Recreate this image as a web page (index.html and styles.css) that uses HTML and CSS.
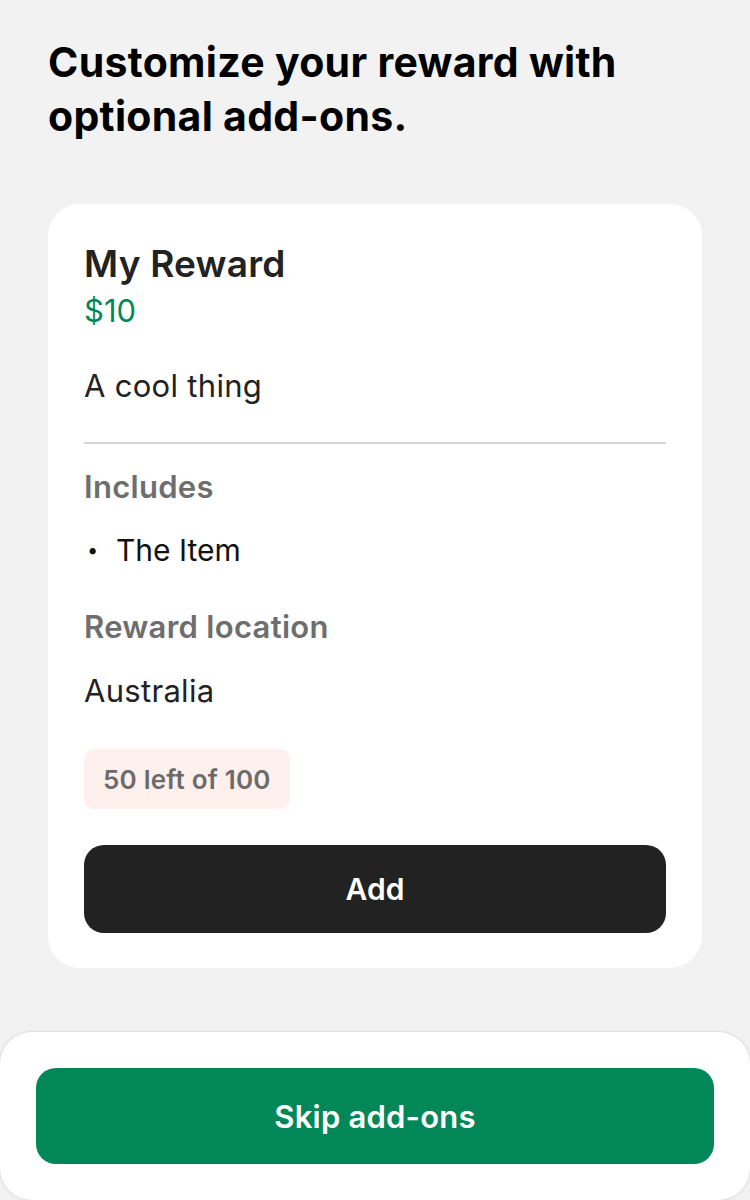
FILE: index.html
```html
<!DOCTYPE html>
<html lang="en">
<head>
<meta charset="utf-8">
<title>Add-ons</title>
<link rel="stylesheet" href="styles.css">
</head>
<body>
<div class="page">
  <main class="content">
    <h1 class="heading">Customize your reward with optional add-ons.</h1>
    <section class="card">
      <h2 class="reward-title">My Reward</h2>
      <div class="price">$10</div>
      <p class="desc">A cool thing</p>
      <hr class="divider">
      <h3 class="label label-includes">Includes</h3>
      <ul class="items">
        <li class="item"><span class="bullet">•</span><span>The Item</span></li>
      </ul>
      <h3 class="label label-location">Reward location</h3>
      <p class="location">Australia</p>
      <div class="badge">50 left of 100</div>
      <button class="btn btn-dark">Add</button>
    </section>
  </main>
  <footer class="sheet">
    <button class="btn btn-green">Skip add-ons</button>
  </footer>
</div>
</body>
</html>
```

FILE: styles.css
```css
* { box-sizing: border-box; }
html, body { margin: 0; padding: 0; }
body {
  background: #f2f2f2;
  font-family: Inter, "Noto Sans", "Liberation Sans", sans-serif;
  color: #222222;
}
.page {
  height: 1200px;
  display: flex;
  flex-direction: column;
  overflow: hidden;
}
.content {
  padding: 35px 48px 0;
}
.heading {
  margin: 0;
  font-size: 41px;
  line-height: 54px;
  font-weight: 700;
  color: #000;
  letter-spacing: 0.3px;
}
.card {
  margin-top: 61px;
  background: #fff;
  border-radius: 32px;
  padding: 38px 36px 35px;
  display: flex;
  flex-direction: column;
  align-items: flex-start;
}
.reward-title {
  margin: 0;
  font-size: 37px;
  line-height: 44px;
  font-weight: 600;
  color: #222;
  letter-spacing: 0.2px;
}
.price {
  margin-top: 7px;
  font-size: 31px;
  line-height: 36px;
  color: #028858;
}
.desc {
  margin: 39px 0 0;
  font-size: 31px;
  line-height: 36px;
  letter-spacing: 0.3px;
}
.divider {
  align-self: stretch;
  margin: 38px 0 0;
  border: 0;
  height: 2px;
  background: #d6d6d6;
}
.label {
  margin: 0;
  font-size: 31px;
  line-height: 36px;
  font-weight: 600;
  color: #6e6e6e;
  letter-spacing: 0.3px;
}
.label-includes { margin-top: 25px; }
.items {
  list-style: none;
  margin: 27px 0 0;
  padding: 0;
}
.item {
  display: flex;
  align-items: center;
  font-size: 30px;
  line-height: 36px;
  color: #111;
}
.bullet {
  width: 32px;
  padding-left: 3px;
  font-size: 20px;
}
.label-location { margin-top: 41px; }
.location {
  margin: 28px 0 0;
  font-size: 31px;
  line-height: 36px;
  letter-spacing: 0.3px;
}
.badge {
  margin-top: 40px;
  height: 60px;
  padding: 0 19px;
  display: flex;
  align-items: center;
  background: #fef0ec;
  border-radius: 10px;
  font-size: 26px;
  font-weight: 600;
  color: #6b6b6b;
  letter-spacing: 0.2px;
}
.btn {
  border: 0;
  font-family: inherit;
  font-weight: 600;
  font-size: 30px;
  color: #fff;
  border-radius: 20px;
  display: flex;
  align-items: center;
  justify-content: center;
}
.btn-dark {
  margin-top: 36px;
  align-self: stretch;
  height: 88px;
  background: #222;
}
.sheet {
  margin-top: auto;
  height: 168px;
  background: #fff;
  border-radius: 32px;
  box-shadow: 0 0 3px rgba(0,0,0,0.18);
  padding: 36px 36px;
}
.btn-green {
  width: 100%;
  height: 96px;
  background: #028858;
  font-size: 31px;
  letter-spacing: 0.2px;
}
```
